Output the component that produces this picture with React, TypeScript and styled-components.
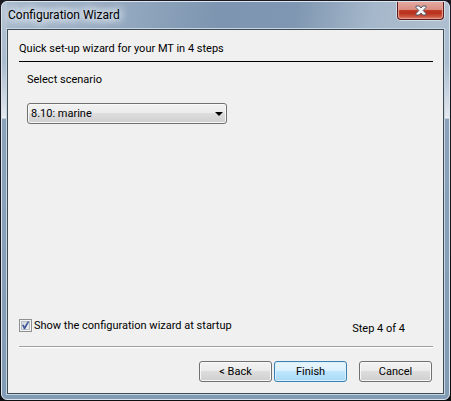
import React from "react";
import styled, { createGlobalStyle } from "styled-components";

const GlobalStyle = createGlobalStyle`
  *, *::before, *::after { box-sizing: border-box; }
  body {
    margin: 0;
    background: #2b2a2e;
    color: #000;
    font: 11px/14px Roboto, "Noto Sans", sans-serif;
  }
`;

const Desktop = styled.div`
  display: flex;
  min-height: 100vh;
  padding: 1px;
  background: linear-gradient(#1b1a22, #0d0e10);
`;

const WindowFrame = styled.main`
  flex: 1;
  display: flex;
  flex-direction: column;
  padding: 0 5px 5px;
  border: 1px solid #dbe5ee;
  border-radius: 6px;
  background:
    linear-gradient(#b0c0d1, #a9bbce 60px, #e2e6ee 114px, #f0f4f8 116px, #8ba2ba 117px, #829bb5 100%) right / 5px 100% no-repeat,
    linear-gradient(#b4c3d3, #a9bbce 60px, #e2e6ee 114px, #f0f4f8 116px, #8ba2ba 117px, #829bb5 100%) left / 5px 100% no-repeat,
    linear-gradient(100deg, #a9bacd 0, #96abc2 25%, #7d95b0 48%, #7f97b2 65%, #a5b7ca 82%, #b0c0d1 100%) top / 100% 40px no-repeat,
    #829bb5;
`;

const TitleBar = styled.header`
  display: flex;
  align-items: flex-start;
  justify-content: space-between;
  height: 27px;
`;

const Title = styled.h1`
  margin: 4px 0 0 1px;
  font-size: 12px;
  line-height: 18px;
  font-weight: 400;
  text-shadow: 0 0 6px #e4ebf2, 0 0 8px #e4ebf2, 0 0 10px #e4ebf2, 0 0 12px #e4ebf2;
`;

const CloseButton = styled.button`
  display: flex;
  align-items: center;
  justify-content: center;
  width: 47px;
  height: 18px;
  padding: 0;
  border: 1px solid #5a1a18;
  border-top: 0;
  border-radius: 0 0 4px 4px;
  background: linear-gradient(#e3aaa0, #d98c80 46%, #c03a24 50%, #b8301c 65%, #d8705a 100%);
  box-shadow: 0 0 0 1px #d3dde7, inset 0 0 1px 1px #e8a598;
`;

const Client = styled.section`
  flex: 1;
  display: flex;
  flex-direction: column;
  padding: 12px 10px 11px 11px;
  border: 1px solid #3f4b54;
  outline: 1px solid #c6d5e0;
  background: #f0f0f0;
`;

const Heading = styled.h2`
  margin: 0;
  padding-bottom: 5px;
  border-bottom: 1px solid #000;
  font-size: 11px;
  line-height: 14px;
  font-weight: 400;
`;

const Scenario = styled.div`
  flex: 1;
  display: flex;
  flex-direction: column;
  align-items: flex-start;
  gap: 16px;
  padding: 11px 8px;
`;

const SelectBox = styled.div`
  display: grid;
  align-items: center;
  width: 200px;

  > * { grid-area: 1 / 1; }
  > svg { justify-self: end; margin-right: 4px; pointer-events: none; }
`;

const Select = styled.select`
  appearance: none;
  width: 100%;
  height: 21px;
  padding: 1px 18px 0 3px;
  border: 1px solid #707070;
  border-radius: 3px;
  background: linear-gradient(#f2f2f2, #ebebeb 49%, #dddddd 50%, #cfcfcf);
  box-shadow: inset 0 0 0 1px #f8f8f8;
  color: #000;
  font: inherit;
`;

const StatusRow = styled.div`
  display: flex;
  align-items: flex-start;
  justify-content: space-between;
  padding-right: 28px;
`;

const CheckLabel = styled.label`
  display: flex;
  align-items: flex-start;
  gap: 2px;
`;

const CheckBox = styled.span`
  display: grid;
  width: 13px;
  height: 13px;

  > * { grid-area: 1 / 1; }
  > svg { visibility: hidden; pointer-events: none; }
  > input:checked + svg { visibility: visible; }
`;

const CheckInput = styled.input`
  appearance: none;
  width: 13px;
  height: 13px;
  margin: 0;
  border: 1px solid #8e8f8f;
  background: linear-gradient(135deg, #cbcfd5, #f6f6f6);
  box-shadow: inset 0 0 0 1px #f4f4f4, inset 0 0 0 2px #b9bfc6;
`;

const StepText = styled.p`
  margin: 3px 0 0;
`;

const Actions = styled.footer`
  display: flex;
  justify-content: flex-end;
  gap: 2px;
  margin-top: 10px;
  padding: 14px 1px 0 0;
  border-top: 1px solid #a0a0a0;
  box-shadow: inset 0 1px #fff;
`;

const Button = styled.button<{ $primary?: boolean; $apart?: boolean }>`
  width: 73px;
  height: 21px;
  margin-left: ${(p) => (p.$apart ? "10px" : "0")};
  padding: 1px 0 0;
  border: 1px solid ${(p) => (p.$primary ? "#3c7fb1" : "#707070")};
  border-radius: 3px;
  background: ${(p) =>
    p.$primary
      ? "linear-gradient(#eaf6fd, #d9f0fc 49%, #bee6fd 50%, #a7d9f5)"
      : "linear-gradient(#f2f2f2, #ebebeb 49%, #dddddd 50%, #cfcfcf)"};
  box-shadow: inset 0 0 0 1px ${(p) => (p.$primary ? "#d8f1fd" : "#f8f8f8")};
  color: #000;
  font: inherit;
`;

export default function App() {
  return (
    <>
      <GlobalStyle />
      <Desktop>
        <WindowFrame>
          <TitleBar>
            <Title>Configuration Wizard</Title>
            <CloseButton type="button" aria-label="Close">
              <svg width="12" height="11" viewBox="0 0 12 11" aria-hidden="true">
                <path
                  d="M1 1H4.3L6 3L7.7 1H11V2.5L8.2 5.5L11 8.5V10H7.7L6 8L4.3 10H1V8.5L3.8 5.5L1 2.5Z"
                  fill="#f6f6f6"
                  stroke="#535666"
                />
              </svg>
            </CloseButton>
          </TitleBar>
          <Client>
            <Heading>Quick set-up wizard for your MT in 4 steps</Heading>
            <Scenario>
              <label htmlFor="scenario">Select scenario</label>
              <SelectBox>
                <Select id="scenario" defaultValue="marine">
                  <option value="marine">8.10: marine</option>
                </Select>
                <svg width="8" height="4" viewBox="0 0 8 4" aria-hidden="true">
                  <path d="M0 0H8L4 4Z" />
                </svg>
              </SelectBox>
            </Scenario>
            <StatusRow>
              <CheckLabel>
                <CheckBox>
                  <CheckInput type="checkbox" defaultChecked />
                  <svg width="13" height="13" viewBox="0 0 13 13" aria-hidden="true">
                    <path d="M3 6L4.5 5.5L5.5 7.5L8.7 2.5L10.3 2.5L6 10.3H5Z" fill="#3f5399" />
                  </svg>
                </CheckBox>
                Show the configuration wizard at startup
              </CheckLabel>
              <StepText>Step 4 of 4</StepText>
            </StatusRow>
            <Actions>
              <Button type="button">&lt; Back</Button>
              <Button type="button" $primary>Finish</Button>
              <Button type="button" $apart>Cancel</Button>
            </Actions>
          </Client>
        </WindowFrame>
      </Desktop>
    </>
  );
}
